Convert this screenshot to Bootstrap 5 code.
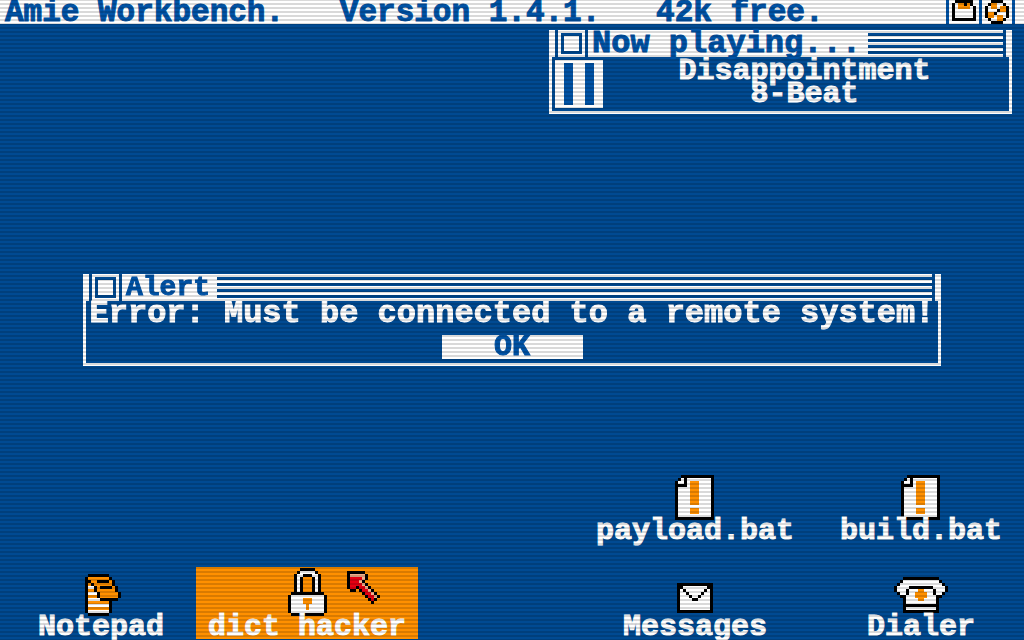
<!DOCTYPE html>
<html lang="en">
<head>
<meta charset="utf-8">
<meta name="viewport" content="width=device-width, initial-scale=1">
<title>Amie Workbench</title>
<link href="https://cdn.jsdelivr.net/npm/bootstrap@5.3.0/dist/css/bootstrap.min.css" rel="stylesheet">
<style>
:root { --desk: #004a92; --ink: #0053a6; --hot: #ff9000; }
body {
  background: var(--desk); color: #fff;
  font: bold 30px/23px "Liberation Mono", monospace;
  -webkit-text-stroke: 1px currentColor;
}
/* CRT scanlines over the whole screen */
.scan {
  z-index: 2000; pointer-events: none;
  background: repeating-linear-gradient(#00000026 0 1px, transparent 1px 3px, #00000026 3px 4px);
}
button { font: inherit; -webkit-text-stroke: inherit; }
svg { display: block; flex: none; shape-rendering: crispEdges; }
.menubar { background: #fff; color: var(--ink); font-size: 31px; line-height: 26px; height: 24px; }
.menubar-text { white-space: pre; padding-left: 5px; }
.tool { width: 33px; height: 24px; border: 0; border-left: 3px solid var(--ink); background: #fff; padding: 0 3px; }
.tools { border-right: 3px solid var(--ink); margin-right: 9px; }

.win-title { height: 27px; background: #fff; color: var(--ink); padding: 0 6px; }
.win-title h2 { font: inherit; font-size: 32px; line-height: 27px; padding: 0 7px 0 4px; margin: 0; white-space: nowrap; }
.win-title h2.compact { font-size: 28px; }
.gadget { width: 33px; height: 27px; padding: 3px; background: #fff; border: solid var(--desk); border-width: 0 3px; }
.gadget span { display: block; height: 21px; border: 3px solid var(--desk); }
.drag { background: repeating-linear-gradient(#fff 0 3px, var(--desk) 3px 6px); border-right: 3px solid var(--desk); }
.win-body { border: 3px solid #fff; border-top: 0; background: var(--desk); padding: 3px; }

.player { width: 463px; max-width: 100%; margin: 6px 12px 0 0; }
.track { line-height: 23px; }
.pause { width: 48px; height: 48px; border: 0; padding: 3px 9px; background: #fff; }
.pause span { width: 9px; background: var(--ink); }
.alert-win { width: 858px; max-width: 100%; }
.alert-text { font-size: 32px; line-height: 19px; margin: 0 0 12px; white-space: nowrap; }
.ok { width: 141px; height: 24px; border: 0; padding: 0; background: #fff; color: var(--ink); line-height: 24px; }

.desk-icons { padding: 0 22px 1px 38px; }
.desk-grid { grid-template-columns: max-content max-content; gap: 34px 46px; }
.desk-item { color: #fff; text-decoration: none; white-space: nowrap; }
.desk-item .raised { margin-bottom: 3px; }
.picked { background: var(--hot); padding: 1px 12px 0; }
.pointer-sprite { left: 151px; top: 4px; }
</style>
</head>
<body>
<div class="min-vh-100 d-flex flex-column overflow-hidden">
  <header class="menubar d-flex justify-content-between">
    <div class="menubar-text">Amie Workbench.   Version 1.4.1.   42k free.</div>
    <div class="tools d-flex">
      <button class="tool" aria-label="Files"><svg data-sprite="folder"></svg></button>
      <button class="tool" aria-label="Disk"><svg data-sprite="disk"></svg></button>
    </div>
  </header>

  <section class="player align-self-end">
    <div class="win-title d-flex">
      <button class="gadget" aria-label="Close player"><span></span></button>
      <h2>Now playing...</h2>
      <div class="drag flex-grow-1"></div>
    </div>
    <div class="win-body d-flex align-items-start">
      <button class="pause d-flex justify-content-between" aria-label="Pause"><span></span><span></span></button>
      <div class="track flex-grow-1 text-center">Disappointment<br>8-Beat</div>
    </div>
  </section>

  <main class="desk-icons mt-auto d-flex justify-content-between align-items-end">
    <div class="d-flex align-items-end" style="gap:32px">
      <a href="#" class="desk-item d-flex flex-column align-items-center"><svg data-sprite="notepad" class="ms-1"></svg>Notepad</a>
      <a href="#" class="desk-item picked position-relative d-flex flex-column align-items-center"><svg data-sprite="lock"></svg>dict hacker<svg data-sprite="pointer" class="pointer-sprite position-absolute"></svg></a>
    </div>
    <div class="desk-grid d-grid align-items-end">
      <a href="#" class="desk-item d-flex flex-column align-items-center"><svg data-sprite="script"></svg>payload.bat</a>
      <a href="#" class="desk-item d-flex flex-column align-items-center"><svg data-sprite="script"></svg>build.bat</a>
      <a href="#" class="desk-item d-flex flex-column align-items-center"><svg data-sprite="mail" class="raised"></svg>Messages</a>
      <a href="#" class="desk-item d-flex flex-column align-items-center"><svg data-sprite="phone" class="raised"></svg>Dialer</a>
    </div>
  </main>
</div>

<section class="alert-win position-fixed top-50 start-50 translate-middle" role="alertdialog" aria-labelledby="alert-title">
  <div class="win-title d-flex">
    <button class="gadget" aria-label="Close alert"><span></span></button>
    <h2 class="compact" id="alert-title">Alert</h2>
    <div class="drag flex-grow-1"></div>
  </div>
  <div class="win-body text-center pb-1">
    <p class="alert-text">Error: Must be connected to a remote system!</p>
    <button class="ok d-block mx-auto">OK</button>
  </div>
</section>
<div class="scan position-fixed top-0 start-0 w-100 h-100"></div>

<script src="https://cdn.jsdelivr.net/npm/bootstrap@5.3.0/dist/js/bootstrap.bundle.min.js"></script>
<script>
// Sprites: one letter per cell, three screen pixels per cell
const colours = { B: '#000', W: '#fff', O: '#ff9000', R: '#e60012', P: '#f2b08c' };
const sprites = {
  folder: ['.BBBBBB.','BWOOBOB.','BWOOOOWB','BWWWWWWB','BWWWWWWB','BWWWWWWB','BBBBBBBB','........'],
  disk: ['..BBBB..','.BOOWWB.','BWOOWOOB','BWWWBOOB','BOOBWWWB','BOOWOOWB','.BWWOOB.','..BBBB..'],
  script: ['..BBBBBBBBBBB','.BWBWWWWWWWWB','BWWBWOOOWWWWB','BBBBWOOOWWWWB','BWWWWOOOWWWWB','BWWWWOOOWWWWB','BWWWWOOOWWWWB','BWWWWOOOWWWWB','BWWWWOOOWWWWB','BWWWWOOOWWWWB','BWWWWWWWWWWWB','BWWWWOOOWWWWB','BWWWWOOOWWWWB','BWWWWWWWWWWWB','BBBBBBBBBBBBB'],
  notepad: ['.BBBBBBB....','BOOOOOOOB...','BBOOBBBBOB..','BOBOOOOOOB..','BWWBOBBBBOB.','BOOBOOOOOOB.','BWWWBOOOOOOB','BOOOBOOOOOOB','BWWWWBBBBBB.','BOOOOOOOB...','BWWWWWWWB...','BOOOOOOOB...','BWWWWWWWB...','.BBBBBBB....'],
  lock: ['....BBBBB....','...BWWWWWB...','..BWWBBBWWB..','..BWB...BWB..','..BWB...BWB..','..BWB...BWB..','..BWB...BWB..','..BWB...BWB..','.BBBBBBBBBBB.','BWWWWWWWWWWWB','BWWWWOOOWWWWB','BWWWWOOOWWWWB','BWWWWWOWWWWWB','BWWWWWOWWWWWB','BWWWWWWWWWWWB','.BBBBBBBBBBB.'],
  pointer: ['BBBBBB.....','BPPPPPB....','BRRRRPB....','BRRRPB.....','BRRRRPB....','BRRBRRPB...','.BB.BRRPB..','.....BRRPB.','......BRRPB','.......BRB.','........B..'],
  mail: ['BBBBBBBBBBBB','BBWWWWWWWWBB','BWBWWWWWWBWB','BWWBWWWWBWWB','BWWWBWWBWWWB','BWWWWBBWWWWB','BWWWWWWWWWWB','BWWWWWWWWWWB','BWWWWWWWWWWB','BBBBBBBBBBBB'],
  phone: ['...BBBBBBBBBBBB...','..BWWWWWWWWWWWWB..','.BWWWWWWWWWWWWWWB.','BWWWWBBBBBBBBWWWWB','BWWWBWWWOOWWWBWWWB','.BWWBWWOOOOWWBWWB.','..BBWWWOOOOWWWBB..','...BWWWWOOWWWWB...','...BWWWWWWWWWWB...','...BBBBBBBBBBBB...','...BWWWWWWWWWWB...','...BBBBBBBBBBBB...']
};
document.querySelectorAll('[data-sprite]').forEach(svg => {
  const rows = sprites[svg.dataset.sprite], w = rows[0].length, h = rows.length;
  svg.setAttribute('viewBox', `0 0 ${w} ${h}`);
  svg.setAttribute('width', w * 3);
  svg.setAttribute('height', h * 3);
  svg.innerHTML = rows.map((row, y) => [...row].map((c, x) =>
    colours[c] ? `<rect x="${x}" y="${y}" width="1" height="1" fill="${colours[c]}"/>` : '').join('')).join('');
});
</script>
</body>
</html>
